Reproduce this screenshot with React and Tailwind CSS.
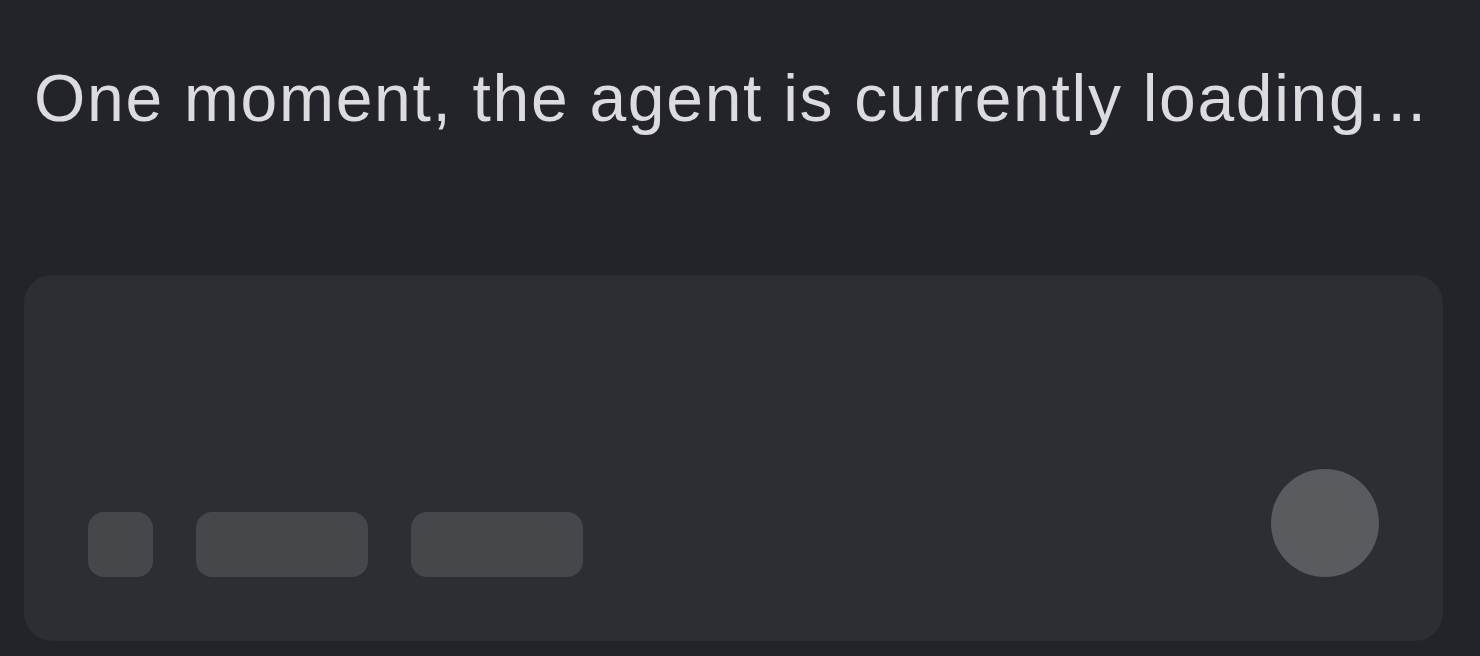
export default function App() {
  return (
    <div className="w-[1480px] h-[656px] bg-[#232429] overflow-hidden" style={{ fontFamily: '"Liberation Sans", Arial, sans-serif' }}>
      <div className="pt-[65px] pl-[34px] text-[66px] leading-none tracking-[1.7px] text-[#dcdcde] whitespace-nowrap">
        One moment, the agent is currently loading...
      </div>
      <div className="mt-[144px] ml-[24px] w-[1419px] h-[366px] rounded-[28px] bg-[#2d2e33] flex items-end justify-between px-[64px] pb-[64px]">
        <div className="flex gap-[43px]">
          <div className="w-[65px] h-[65px] rounded-[16px] bg-[#46474b]" />
          <div className="w-[172px] h-[65px] rounded-[16px] bg-[#46474b]" />
          <div className="w-[172px] h-[65px] rounded-[16px] bg-[#46474b]" />
        </div>
        <div className="w-[108px] h-[108px] rounded-full bg-[#5a5b5e]" />
      </div>
    </div>
  );
}
